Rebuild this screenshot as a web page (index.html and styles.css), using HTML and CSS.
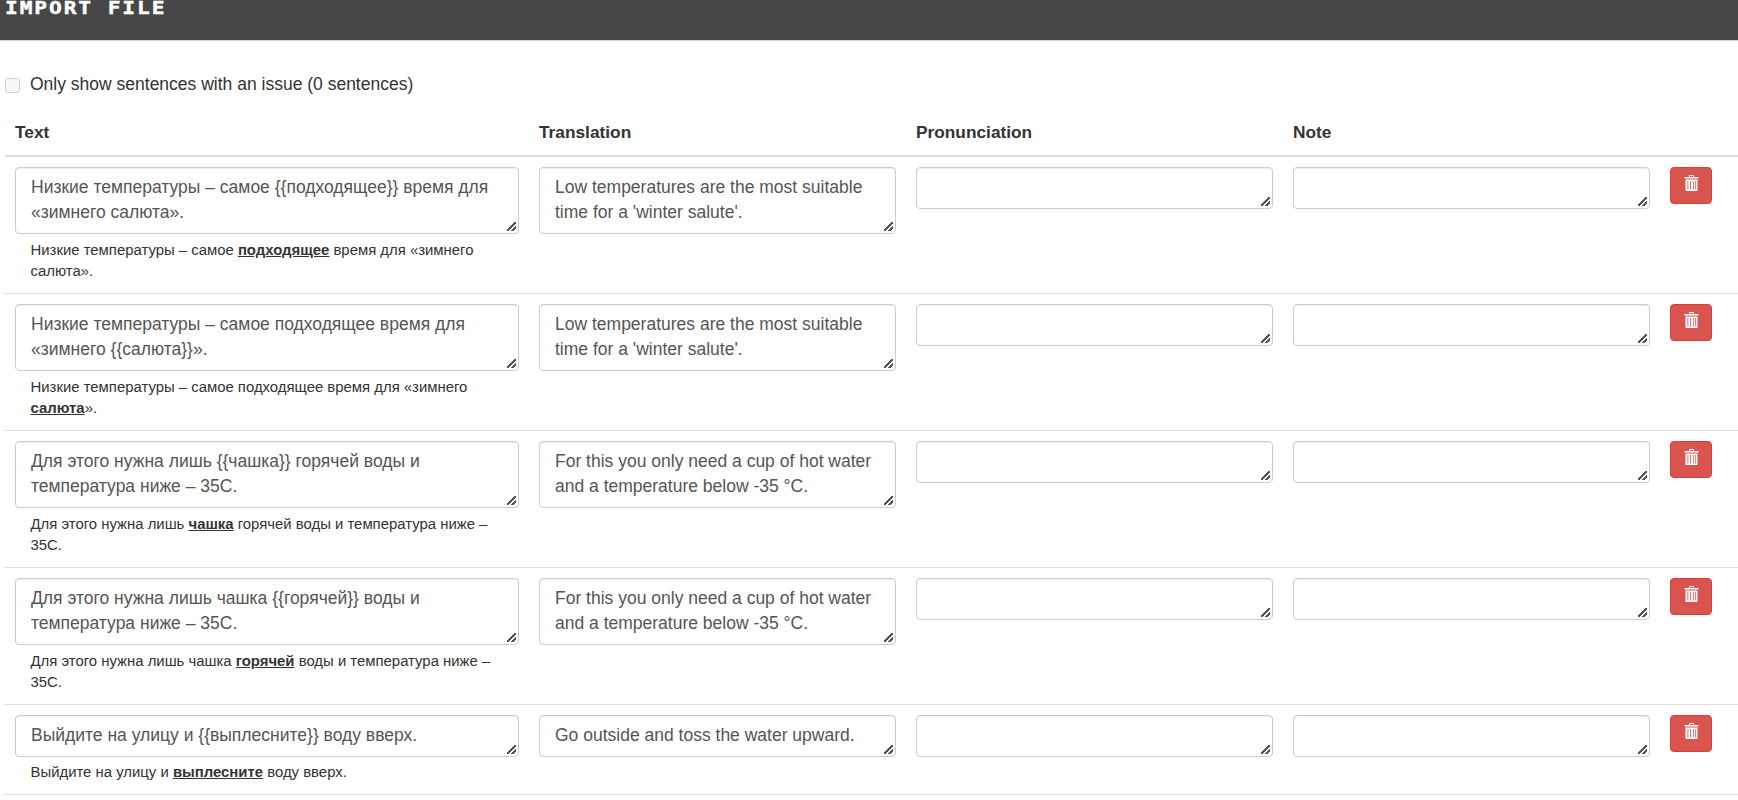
FILE: index.html
```html
<!DOCTYPE html>
<html lang="en">
<head>
    <meta charset="UTF-8">
    <meta name="viewport" content="width=device-width, initial-scale=1.0">
    <title>Import file</title>
    <link rel="stylesheet" href="styles.css">
</head>
<body>
    <header class="page-header">
        <h1 class="page-title">IMPORT FILE</h1>
    </header>

    <main class="content">
        <label class="issue-filter">
            <input type="checkbox" class="issue-check">
            <span>Only show sentences with an issue (0 sentences)</span>
        </label>

        <table class="sentences">
            <colgroup>
                <col class="col-text">
                <col class="col-field">
                <col class="col-field">
                <col class="col-field">
                <col class="col-action">
            </colgroup>
            <thead>
                <tr>
                    <th>Text</th>
                    <th>Translation</th>
                    <th>Pronunciation</th>
                    <th>Note</th>
                    <th></th>
                </tr>
            </thead>
            <tbody>
                <tr>
                    <td>
                        <textarea class="field" rows="2">Низкие температуры – самое {{подходящее}} время для «зимнего салюта».</textarea>
                        <p class="preview">Низкие температуры – самое <b>подходящее</b> время для «зимнего салюта».</p>
                    </td>
                    <td><textarea class="field" rows="2">Low temperatures are the most suitable time for a 'winter salute'.</textarea></td>
                    <td><textarea class="field" rows="1"></textarea></td>
                    <td><textarea class="field" rows="1"></textarea></td>
                    <td>
                        <button class="btn-delete" type="button">
                            <svg class="icon-trash" viewBox="0 0 15 16"><path d="M5 2V.8C5 .4 5.3 0 5.8 0h3.4c.5 0 .8.4.8.8V2h4.500v1.600H.5V2zM6 2h3V1H6z"/><path fill-rule="evenodd" d="M1.500 4.600h12V15c0 .6-.4 1-1 1h-10c-.6 0-1-.4-1-1zM3.500 6v8.500h.8V6zm2.700 0v8.500H7V6zm2.700 0v8.500h.8V6zm2.400 0v8.500h.8V6z"/></svg>
                        </button>
                    </td>
                </tr>
                <tr>
                    <td>
                        <textarea class="field" rows="2">Низкие температуры – самое подходящее время для «зимнего {{салюта}}».</textarea>
                        <p class="preview">Низкие температуры – самое подходящее время для «зимнего <b>салюта</b>».</p>
                    </td>
                    <td><textarea class="field" rows="2">Low temperatures are the most suitable time for a 'winter salute'.</textarea></td>
                    <td><textarea class="field" rows="1"></textarea></td>
                    <td><textarea class="field" rows="1"></textarea></td>
                    <td>
                        <button class="btn-delete" type="button">
                            <svg class="icon-trash" viewBox="0 0 15 16"><path d="M5 2V.8C5 .4 5.3 0 5.8 0h3.4c.5 0 .8.4.8.8V2h4.500v1.600H.5V2zM6 2h3V1H6z"/><path fill-rule="evenodd" d="M1.500 4.600h12V15c0 .6-.4 1-1 1h-10c-.6 0-1-.4-1-1zM3.500 6v8.500h.8V6zm2.700 0v8.500H7V6zm2.700 0v8.500h.8V6zm2.400 0v8.500h.8V6z"/></svg>
                        </button>
                    </td>
                </tr>
                <tr>
                    <td>
                        <textarea class="field" rows="2">Для этого нужна лишь {{чашка}} горячей воды и температура ниже – 35C.</textarea>
                        <p class="preview">Для этого нужна лишь <b>чашка</b> горячей воды и температура ниже – 35C.</p>
                    </td>
                    <td><textarea class="field" rows="2">For this you only need a cup of hot water and a temperature below -35 °C.</textarea></td>
                    <td><textarea class="field" rows="1"></textarea></td>
                    <td><textarea class="field" rows="1"></textarea></td>
                    <td>
                        <button class="btn-delete" type="button">
                            <svg class="icon-trash" viewBox="0 0 15 16"><path d="M5 2V.8C5 .4 5.3 0 5.8 0h3.4c.5 0 .8.4.8.8V2h4.500v1.600H.5V2zM6 2h3V1H6z"/><path fill-rule="evenodd" d="M1.500 4.600h12V15c0 .6-.4 1-1 1h-10c-.6 0-1-.4-1-1zM3.500 6v8.500h.8V6zm2.700 0v8.500H7V6zm2.700 0v8.500h.8V6zm2.400 0v8.500h.8V6z"/></svg>
                        </button>
                    </td>
                </tr>
                <tr>
                    <td>
                        <textarea class="field" rows="2">Для этого нужна лишь чашка {{горячей}} воды и температура ниже – 35C.</textarea>
                        <p class="preview">Для этого нужна лишь чашка <b>горячей</b> воды и температура ниже – 35C.</p>
                    </td>
                    <td><textarea class="field" rows="2">For this you only need a cup of hot water and a temperature below -35 °C.</textarea></td>
                    <td><textarea class="field" rows="1"></textarea></td>
                    <td><textarea class="field" rows="1"></textarea></td>
                    <td>
                        <button class="btn-delete" type="button">
                            <svg class="icon-trash" viewBox="0 0 15 16"><path d="M5 2V.8C5 .4 5.3 0 5.8 0h3.4c.5 0 .8.4.8.8V2h4.500v1.600H.5V2zM6 2h3V1H6z"/><path fill-rule="evenodd" d="M1.500 4.600h12V15c0 .6-.4 1-1 1h-10c-.6 0-1-.4-1-1zM3.500 6v8.500h.8V6zm2.700 0v8.500H7V6zm2.700 0v8.500h.8V6zm2.400 0v8.500h.8V6z"/></svg>
                        </button>
                    </td>
                </tr>
                <tr>
                    <td>
                        <textarea class="field" rows="1">Выйдите на улицу и {{выплесните}} воду вверх.</textarea>
                        <p class="preview">Выйдите на улицу и <b>выплесните</b> воду вверх.</p>
                    </td>
                    <td><textarea class="field" rows="1">Go outside and toss the water upward.</textarea></td>
                    <td><textarea class="field" rows="1"></textarea></td>
                    <td><textarea class="field" rows="1"></textarea></td>
                    <td>
                        <button class="btn-delete" type="button">
                            <svg class="icon-trash" viewBox="0 0 15 16"><path d="M5 2V.8C5 .4 5.3 0 5.8 0h3.4c.5 0 .8.4.8.8V2h4.500v1.600H.5V2zM6 2h3V1H6z"/><path fill-rule="evenodd" d="M1.500 4.600h12V15c0 .6-.4 1-1 1h-10c-.6 0-1-.4-1-1zM3.500 6v8.500h.8V6zm2.700 0v8.500H7V6zm2.700 0v8.500h.8V6zm2.400 0v8.500h.8V6z"/></svg>
                        </button>
                    </td>
                </tr>
            </tbody>
        </table>
    </main>
</body>
</html>
```

FILE: styles.css
```css
*, *::after, *::before {
    box-sizing: border-box;
}

html, body {
    height: 100%;
    overflow: hidden;
}

body {
    margin: 0;
    background: #fff;
    color: #333;
    font-family: "Liberation Sans", Arial, sans-serif;
    font-size: 17.5px;
    line-height: 25.7px;
}

.page-header {
    height: 40px;
    padding-left: 5px;
    background: #474747;
    box-shadow: 0 1px 1px rgba(0, 0, 0, 0.15);
}

.page-title {
    width: fit-content;
    margin: 0;
    color: #fff;
    font-family: "DejaVu Sans Mono", monospace;
    font-size: 17px;
    font-weight: bold;
    line-height: 17px;
    letter-spacing: 1.5px;
    transform: scaleX(1.25);
    transform-origin: left;
    -webkit-text-stroke: 0.4px #fff;
}

.content {
    padding: 32px 0 0 5px;
}

.issue-filter {
    display: flex;
    align-items: center;
    gap: 10px;
    height: 26px;
    margin-bottom: 12px;
}

.issue-check {
    appearance: none;
    width: 15px;
    height: 15px;
    margin: 0;
    border: 1px solid #cfcfcf;
    border-radius: 3px;
    background: #f7f7f7;
}

.sentences {
    width: 1733px;
    border-collapse: collapse;
    table-layout: fixed;
}

.col-text { width: 524px; }
.col-field { width: 377px; }
.col-action { width: 78px; }

.sentences th {
    padding: 10px 10px 9px 10px;
    border-bottom: 2px solid #ddd;
    font-size: 17.3px;
    font-weight: bold;
    text-align: left;
}

.sentences td {
    padding: 10px;
    border-bottom: 1px solid #ddd;
    vertical-align: top;
}

.field {
    display: block;
    width: 100%;
    min-height: 42px;
    padding: 7px 15px;
    border: 1px solid #ccc;
    border-radius: 4px;
    box-shadow: inset 0 1px 1px rgba(0, 0, 0, 0.075);
    color: #555;
    font: inherit;
}

.field::-webkit-resizer {
    background: linear-gradient(135deg, transparent 42%, #555 42% 56%, transparent 56% 70%, #555 70% 84%, transparent 84%) no-repeat right 2px bottom 2px / 9px 9px;
}

.preview {
    margin: 5.8px 0 0 15.5px;
    font-size: 14.9px;
    line-height: 21.4px;
}

.preview b {
    text-decoration: underline;
}

.btn-delete {
    display: flex;
    justify-content: center;
    width: 42px;
    height: 37px;
    padding: 7px 0 0;
    border: 1px solid #d43f3a;
    border-radius: 4px;
    background: #d9534f;
}

.icon-trash {
    width: 15px;
    height: 16px;
    fill: #fff;
}
```
